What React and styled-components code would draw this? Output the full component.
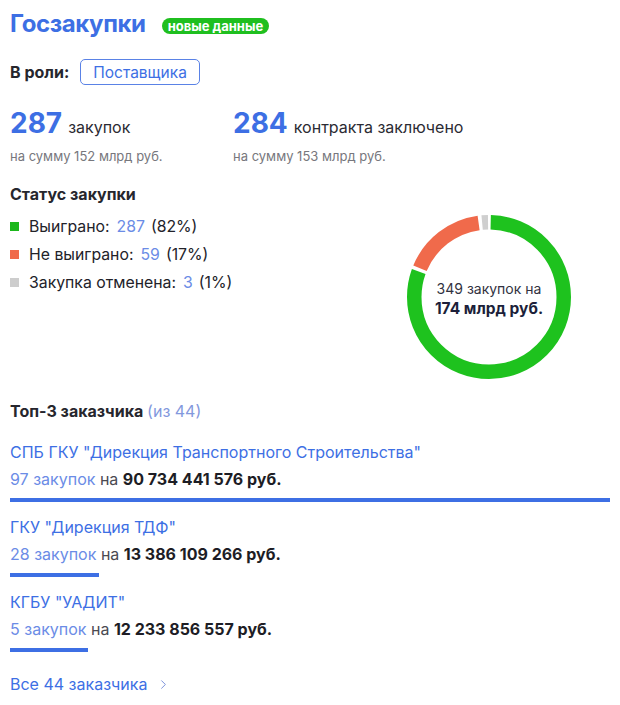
import React from "react";
import styled, { createGlobalStyle } from "styled-components";
import { ChevronRight } from "lucide-react";

const GlobalStyle = createGlobalStyle`
  body {
    margin: 0;
    background: #fff;
    font-family: Inter, "Noto Sans", sans-serif;
    color: #222229;
  }
`;

const BLUE = "#3d6fe4";
const LIGHT_BLUE = "#6b8ce6";

const Page = styled.div`
  width: 620px;
  box-sizing: border-box;
  padding: 9px 10px 0;
`;

const Header = styled.div`
  display: flex;
  align-items: center;
  gap: 16px;
  height: 30px;
`;

const Title = styled.h1`
  margin: 0;
  font-size: 24px;
  line-height: 30px;
  font-weight: 700;
  letter-spacing: -0.4px;
  color: ${BLUE};
`;

const Badge = styled.span`
  display: inline-block;
  margin-top: 3px;
  padding: 0 6px;
  height: 16px;
  line-height: 16px;
  border-radius: 8px;
  background: #1fbf1f;
  color: #fff;
  font-size: 13px;
  font-weight: 700;
`;

const RoleRow = styled.div`
  display: flex;
  align-items: center;
  gap: 11px;
  margin-top: 20px;
`;

const Label = styled.span`
  font-size: 16px;
  font-weight: 700;
  color: #26262d;
`;

const RoleButton = styled.span`
  display: inline-flex;
  align-items: center;
  height: 26px;
  box-sizing: border-box;
  padding: 0 12px;
  border: 1px solid #5a82e6;
  border-radius: 5px;
  font-size: 15.5px;
  color: ${BLUE};
`;

const Stats = styled.div`
  display: grid;
  grid-template-columns: 223px 1fr;
  margin-top: 21px;
`;

const StatTop = styled.div`
  display: flex;
  align-items: baseline;
  gap: 6px;
  line-height: 34px;
`;

const BigNumber = styled.span`
  font-size: 28px;
  font-weight: 700;
  color: ${BLUE};
`;

const StatText = styled.span`
  font-size: 16px;
  color: #2b2b33;
`;

const StatSub = styled.div`
  margin-top: 3px;
  font-size: 13px;
  line-height: 18px;
  color: #77777d;
`;

const StatusSection = styled.div`
  display: flex;
  justify-content: space-between;
  margin-top: 19px;
  padding-right: 39px;
`;

const SectionTitle = styled.div`
  font-size: 16px;
  line-height: 20px;
  font-weight: 700;
  color: #26262d;
`;

const Legend = styled.ul`
  list-style: none;
  margin: 8px 0 0;
  padding: 0;
`;

const LegendItem = styled.li`
  display: flex;
  align-items: center;
  height: 28px;
  font-size: 15.8px;
  color: #222229;
`;

const Swatch = styled.span`
  width: 9px;
  height: 9px;
  margin-right: 10px;
  background: ${({ $color }) => $color};
`;

const Count = styled.span`
  margin: 0 6px 0 7px;
  color: ${LIGHT_BLUE};
`;

const DonutWrap = styled.div`
  position: relative;
  width: 164px;
  height: 164px;
  margin-top: 31px;
`;

const DonutLabel = styled.div`
  position: absolute;
  inset: 0;
  display: flex;
  flex-direction: column;
  align-items: center;
  justify-content: center;
  text-align: center;
  padding-top: 4px;
`;

const DonutCaption = styled.div`
  font-size: 14px;
  line-height: 20px;
  color: #32323f;
`;

const DonutTotal = styled.div`
  font-size: 15.5px;
  line-height: 20px;
  font-weight: 700;
  color: #1c1f3a;
`;

const TopSection = styled.div`
  margin-top: 22px;
`;

const Muted = styled.span`
  font-weight: 400;
  color: #8398dd;
`;

const Customers = styled.div`
  margin-top: 21px;
`;

const Customer = styled.div`
  & + & {
    margin-top: 15px;
  }
`;

const CustomerName = styled.div`
  font-size: 16px;
  line-height: 20px;
  color: ${BLUE};
`;

const CustomerLine = styled.div`
  margin-top: 7px;
  font-size: 16px;
  line-height: 20px;
  color: #4a4a52;
`;

const Purchases = styled.span`
  color: ${LIGHT_BLUE};
`;

const Amount = styled.b`
  font-weight: 700;
  color: #1d1d25;
`;

const Bar = styled.div`
  height: 4px;
  margin-top: 9px;
  background: ${BLUE};
`;

const AllLink = styled.div`
  display: flex;
  align-items: center;
  gap: 9px;
  margin-top: 22px;
  font-size: 16px;
  line-height: 20px;
  color: ${BLUE};
`;

const status = [
  { label: "Выиграно", count: 287, pct: "82%", color: "#1cb71c" },
  { label: "Не выиграно", count: 59, pct: "17%", color: "#f06a4b" },
  { label: "Закупка отменена", count: 3, pct: "1%", color: "#cdcdcd" },
];

const customers = [
  { name: 'СПБ ГКУ "Дирекция Транспортного Строительства"', count: 97, amount: "90 734 441 576", share: 1 },
  { name: 'ГКУ "Дирекция ТДФ"', count: 28, amount: "13 386 109 266", share: 0.148 },
  { name: 'КГБУ "УАДИТ"', count: 5, amount: "12 233 856 557", share: 0.13 },
];

const Donut = () => {
  const r = 74.75;
  const c = 2 * Math.PI * r;
  const gap = 3.5;
  const gray = 6;
  const rest = c - gray - gap * 3;
  const green = (rest * 287) / 346;
  const red = rest - green;
  const segs = [
    { start: gap / 2, len: green, color: "#1ec21e" },
    { start: gap / 2 + green + gap, len: red, color: "#f06a4b" },
    { start: gap / 2 + green + gap + red + gap, len: gray, color: "#cfcfcf" },
  ];
  return (
    <svg width="164" height="164" viewBox="0 0 164 164">
      <g transform="rotate(-90 82 82)">
        {segs.map((s) => (
          <circle
            key={s.color}
            cx="82"
            cy="82"
            r={r}
            fill="none"
            stroke={s.color}
            strokeWidth="14.5"
            strokeDasharray={`${s.len} ${c - s.len}`}
            strokeDashoffset={-s.start}
          />
        ))}
      </g>
    </svg>
  );
};

export default function App() {
  return (
    <>
      <GlobalStyle />
      <Page>
        <Header>
          <Title>Госзакупки</Title>
          <Badge>новые данные</Badge>
        </Header>

        <RoleRow>
          <Label>В роли:</Label>
          <RoleButton>Поставщика</RoleButton>
        </RoleRow>

        <Stats>
          <div>
            <StatTop>
              <BigNumber>287</BigNumber>
              <StatText>закупок</StatText>
            </StatTop>
            <StatSub>на сумму 152 млрд руб.</StatSub>
          </div>
          <div>
            <StatTop>
              <BigNumber>284</BigNumber>
              <StatText>контракта заключено</StatText>
            </StatTop>
            <StatSub>на сумму 153 млрд руб.</StatSub>
          </div>
        </Stats>

        <StatusSection>
          <div>
            <SectionTitle>Статус закупки</SectionTitle>
            <Legend>
              {status.map((s) => (
                <LegendItem key={s.label}>
                  <Swatch $color={s.color} />
                  {s.label}:<Count>{s.count}</Count>({s.pct})
                </LegendItem>
              ))}
            </Legend>
          </div>
          <DonutWrap>
            <Donut />
            <DonutLabel>
              <DonutCaption>349 закупок на</DonutCaption>
              <DonutTotal>174 млрд руб.</DonutTotal>
            </DonutLabel>
          </DonutWrap>
        </StatusSection>

        <TopSection>
          <SectionTitle>
            Топ-3 заказчика <Muted>(из 44)</Muted>
          </SectionTitle>
          <Customers>
            {customers.map((c) => (
              <Customer key={c.name}>
                <CustomerName>{c.name}</CustomerName>
                <CustomerLine>
                  <Purchases>{c.count} закупок</Purchases> на <Amount>{c.amount} руб.</Amount>
                </CustomerLine>
                <Bar style={{ width: `${c.share * 100}%` }} />
              </Customer>
            ))}
          </Customers>
          <AllLink>
            Все 44 заказчика
            <ChevronRight size={15} strokeWidth={1.6} color="#7d93dc" />
          </AllLink>
        </TopSection>
      </Page>
    </>
  );
}
